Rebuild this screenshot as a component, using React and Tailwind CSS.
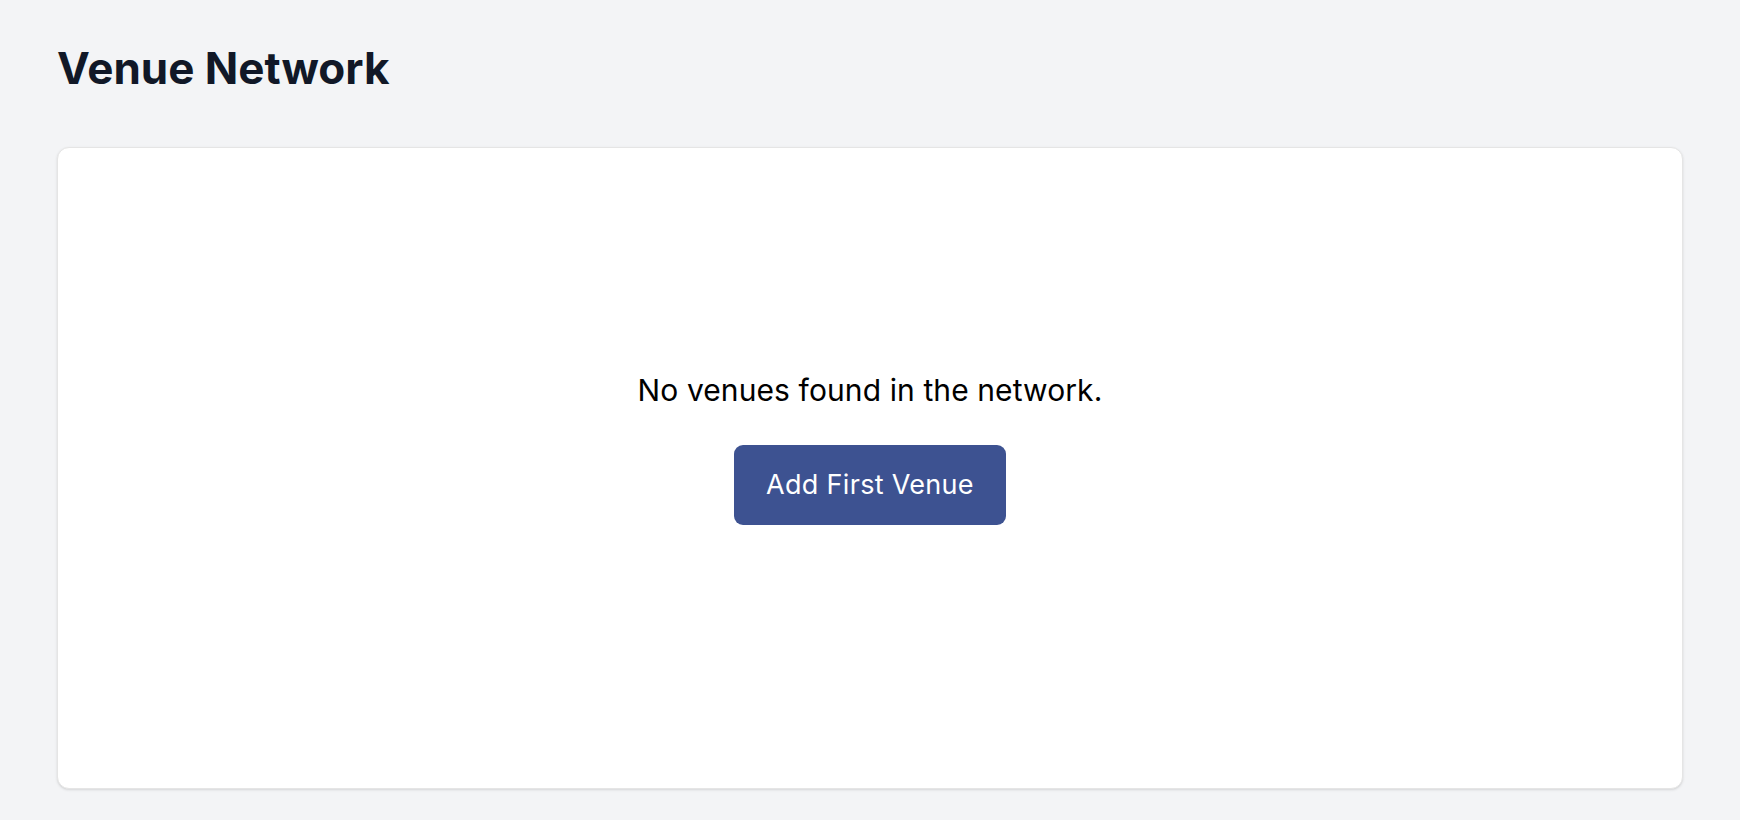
export default function App() {
  return (
    <div className="min-h-screen bg-[#f3f4f6] px-[57px] pt-[42px] font-['Inter',sans-serif]">
      <h1 className="text-[44px] font-bold leading-[53px] text-[#111827]">
        Venue Network
      </h1>

      <div className="mt-[52px] flex h-[642px] flex-col items-center rounded-xl border border-[#e5e5e5] bg-white pt-[220px] shadow-sm">
        <p className="text-[30px] leading-[45px] tracking-[0.1px] text-black">
          No venues found in the network.
        </p>
        <button
          type="button"
          className="mt-[32px] flex h-[80px] w-[272px] items-center justify-center rounded-[9px] bg-[#3d5291] text-[27px] tracking-[0.3px] text-white"
        >
          Add First Venue
        </button>
      </div>
    </div>
  );
}
